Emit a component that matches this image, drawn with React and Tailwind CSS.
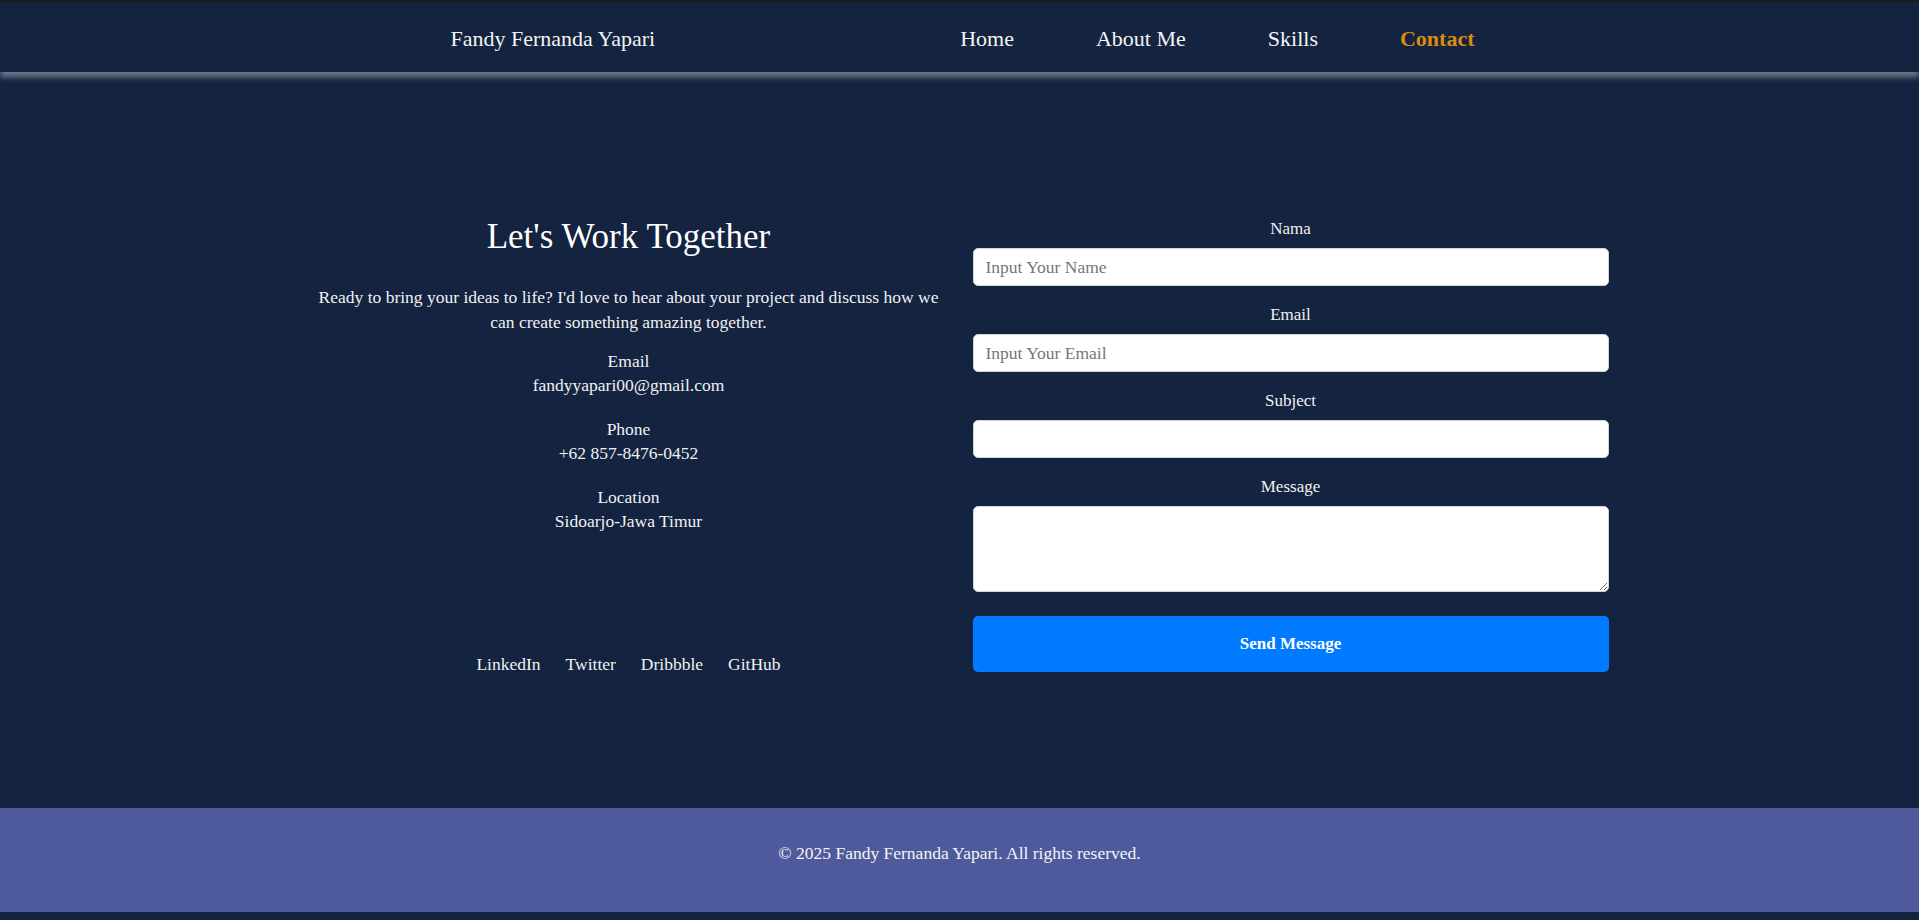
const serif = { fontFamily: '"Liberation Serif", "DejaVu Serif", serif' }

const navLinks = ['Home', 'About Me', 'Skills', 'Contact']
const socials = ['LinkedIn', 'Twitter', 'Dribbble', 'GitHub']

function Field({ label, placeholder }) {
  return (
    <div className="flex flex-col">
      <label className="text-center text-[17px] leading-6 text-[#f1f1f1] mb-[7px]">{label}</label>
      <input
        type="text"
        placeholder={placeholder}
        className="h-[38px] w-full rounded-[5px] border border-[#cfd3da] bg-white px-3 text-[17.5px] text-[#333] placeholder:text-[#767676] outline-none"
        style={serif}
      />
    </div>
  )
}

export default function App() {
  return (
    <div className="min-h-screen bg-[#132340] text-white" style={serif}>
      {/* navbar */}
      <nav className="relative z-10 h-[72px] border-t-2 border-[#1b1c22] bg-[#132340] shadow-[0_5px_6px_rgba(190,195,205,0.55)]">
        <div className="mx-auto flex h-full w-[1030px] items-center justify-between pt-[2px] pl-[6px]">
          <span className="text-[22px] text-[#f4f4f4]">Fandy Fernanda Yapari</span>
          <ul className="flex items-center gap-[82px]">
            {navLinks.map((l) => (
              <li
                key={l}
                className={
                  l === 'Contact'
                    ? 'text-[22px] font-bold text-[#d98c0f]'
                    : 'text-[22px] text-[#f4f4f4]'
                }
              >
                {l}
              </li>
            ))}
          </ul>
        </div>
      </nav>

      {/* contact section */}
      <main className="pt-[145px] pb-[136px]">
        <div className="mx-auto grid w-[1298px] grid-cols-2 gap-[26px]">
          <div className="flex flex-col items-center text-center text-[#f1f1f1]">
            <h2 className="text-[35px] leading-10 text-white">Let's Work Together</h2>
            <p className="mt-[28px] text-[17.5px] leading-[25px]">
              Ready to bring your ideas to life? I'd love to hear about your project and discuss how we
              <br />
              can create something amazing together.
            </p>
            <div className="mt-[14px] text-[17.5px] leading-6">
              <p>Email</p>
              <p>fandyyapari00@gmail.com</p>
            </div>
            <div className="mt-[20px] text-[17.5px] leading-6">
              <p>Phone</p>
              <p>+62 857-8476-0452</p>
            </div>
            <div className="mt-[20px] text-[17.5px] leading-6">
              <p>Location</p>
              <p>Sidoarjo-Jawa Timur</p>
            </div>
            <div className="mt-[123px] flex gap-[25px] text-[17.5px] leading-4">
              {socials.map((s) => (
                <a key={s} href="#" className="text-[#f1f1f1]">
                  {s}
                </a>
              ))}
            </div>
          </div>

          <form className="flex flex-col" onSubmit={(e) => e.preventDefault()}>
            <div className="flex flex-col gap-[17px]">
              <Field label="Nama" placeholder="Input Your Name" />
              <Field label="Email" placeholder="Input Your Email" />
              <Field label="Subject" placeholder="" />
              <div className="flex flex-col">
                <label className="text-center text-[17px] leading-6 text-[#f1f1f1] mb-[7px]">Message</label>
                <textarea
                  className="h-[86px] w-full rounded-[5px] border border-[#cfd3da] bg-white px-3 py-2 text-[17px] text-[#333] outline-none"
                  style={serif}
                />
              </div>
            </div>
            <button
              type="submit"
              className="mt-[24px] h-[56px] w-full rounded-[5px] bg-[#007bff] text-[17px] font-bold text-white"
              style={serif}
            >
              Send Message
            </button>
          </form>
        </div>
      </main>

      {/* footer */}
      <footer className="h-[104px] bg-[#4f5a9c] pt-[33px] text-center text-[17.5px] leading-6 text-[#f4f4f4]">
        © 2025 Fandy Fernanda Yapari. All rights reserved.
      </footer>
      <div className="h-2" />
    </div>
  )
}
